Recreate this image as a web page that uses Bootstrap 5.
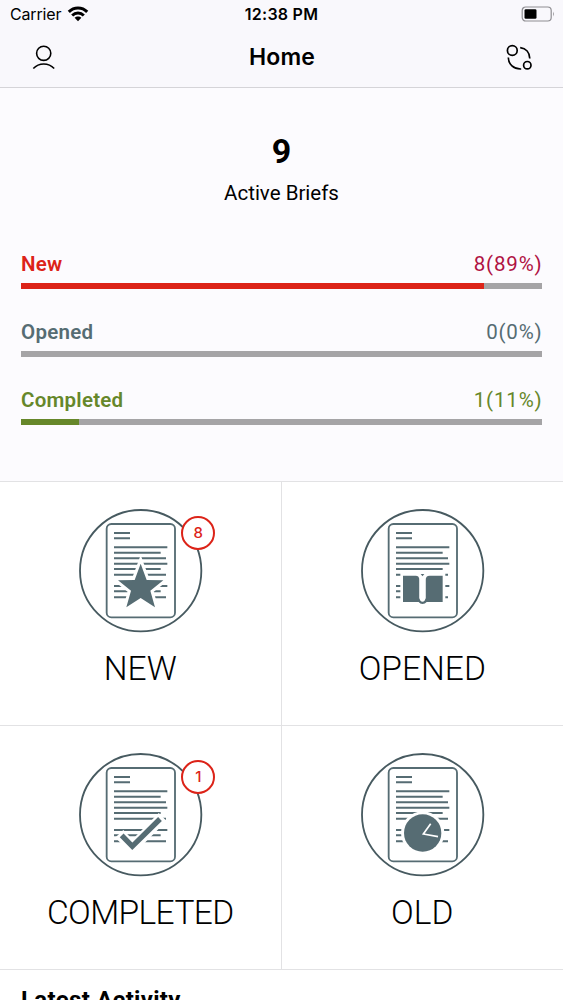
<!DOCTYPE html>
<html lang="en">
<head>
<meta charset="utf-8">
<meta name="viewport" content="width=device-width, initial-scale=1">
<title>Home</title>
<link rel="stylesheet" href="https://cdn.jsdelivr.net/npm/bootstrap@5.3.0/dist/css/bootstrap.min.css">
<style>
  :root { --slate: #566c73; --red: #dc2318; --green: #66872a; --rule: #e2e2e4; }
  html, body { overflow: hidden; height: 1000px; }
  body { font-family: Roboto, "Noto Sans", sans-serif; color: #000; background: #fff; }
  .topbar { height: 88px; background: #f9f8fc; border-bottom: 1px solid #d5d4d8; }
  .status { height: 28px; font: 400 16px/29px Inter, sans-serif; padding: 0 9px 0 10px; }
  .status > *, .titlebar > * { flex: 1 1 0; }
  .status > :first-child { letter-spacing: -.15px; }
  .titlebar { height: 59px; padding: 0 30px 0 31px; }
  .titlebar h1 { font: 600 23px/59px Inter, sans-serif; letter-spacing: .1px; }
  .status .clock { font-weight: 600; letter-spacing: .25px; padding-right: 1px; }
  .summary { height: 393px; background: #fcfbfe; padding: 0 21px; }
  .total { font-size: 34px; line-height: 40px; font-weight: 700; padding-top: 43px; }
  .total-label { font-size: 20.5px; line-height: 24px; margin-top: 10px; letter-spacing: 0; }
  .meters { padding-top: 46px; }
  .meter { height: 68px; font-size: 20.5px; }
  .meter-text { height: 32px; line-height: 27px; }
  .meter-name { font-weight: 600; letter-spacing: .25px; }
  .meter-value { letter-spacing: .85px; margin-right: -.6px; }
  .meter .progress { height: 5.5px; border-radius: 0; background: #a5a4a6; }
  .c-new { color: var(--red); } .c-new .meter-value { color: #b01243; }
  .c-opened { color: var(--slate); }
  .c-completed { color: var(--green); }
  .c-new .progress-bar { background: var(--red); }
  .c-opened .progress-bar { background: var(--slate); }
  .c-completed .progress-bar { background: var(--green); }
  .tile { height: 244px; border-top: 1px solid var(--rule); padding-top: 26px; }
  .tile-l { border-right: 1px solid var(--rule); }
  .pic { width: 126px; height: 126px; }
  .pic svg, .bar-icon { display: block; }
  .count { right: -12px; top: 8px; width: 34px; height: 34px; border: 2px solid var(--red); background: #fff; color: var(--red); font: 500 15px/30px Inter, sans-serif; }
  .tile-name { font-size: 33.5px; line-height: 40px; font-weight: 300; margin-top: 15px; }
  .tile-name.long { letter-spacing: -.6px; }
  .latest { border-top: 1px solid var(--rule); font-size: 24px; line-height: 28px; font-weight: 700; letter-spacing: .3px; padding: 16px 21px 0; height: 31px; }
</style>
</head>
<body>
<svg width="0" height="0" class="position-absolute" aria-hidden="true">
  <defs>
    <g id="sheet" fill="none" stroke="#566c73">
      <circle cx="212" cy="212" r="182" stroke="#475a60" stroke-width="5.5"/>
      <rect x="110" y="72" width="205" height="280" rx="14" stroke-width="5.5"/>
      <path stroke-width="6" d="M132 99H180M132 115H180M132 142H292M132 158H272M132 175H288M132 191H292M132 207H272M132 224H288M132 258H292M132 274H272M132 292H288"/>
    </g>
  </defs>
</svg>

<header class="topbar">
  <div class="status d-flex">
    <div class="d-flex align-items-center"><span>Carrier</span>
      <svg width="22" height="16" viewBox="0 0 22 16" style="margin-left:6px" fill="none" stroke="#000" stroke-width="3"><path d="M1.8 5.9C7 .8 15 .8 20.2 5.9M5.2 9.5C8.5 6.3 13.5 6.3 16.8 9.5"/><path d="M11 15.2L7.6 11.8C9.5 10 12.500 10 14.400 11.8Z" fill="#000" stroke="none"/></svg>
    </div>
    <div class="clock text-center">12:38 PM</div>
    <div class="d-flex align-items-center justify-content-end">
      <svg width="34" height="16" viewBox="0 0 34 16" style="margin-right:-1px"><rect x="1.200" y="1" width="29" height="14" rx="3.500" fill="none" stroke="#8f8e92" stroke-width="1.2"/><rect x="3.500" y="3.200" width="12" height="9.600" rx="1.300"/><path d="M32 5.500Q33.800 8 32 10.500Z" fill="#8f8e92"/></svg>
    </div>
  </div>
  <div class="titlebar d-flex align-items-center">
    <div><svg class="bar-icon" width="26" height="28" viewBox="0 0 26 28" fill="none" stroke="#000" stroke-width="1.600"><circle cx="12.700" cy="9.300" r="7.100"/><path d="M2.300 24.500C8 18.500 17.500 18.500 23.200 24.500"/></svg></div>
    <h1 class="text-center m-0">Home</h1>
    <div class="d-flex justify-content-end"><svg class="bar-icon" width="28" height="28" viewBox="0 0 28 28" fill="none" stroke="#000" stroke-width="1.700"><circle cx="7.300" cy="6.500" r="4.900"/><circle cx="22.300" cy="21.200" r="3.700"/><path d="M15.200 3.700C21 4.300 24.600 8.500 24.800 14.500M3.300 13.500C3.600 20.500 8.500 25.300 16.200 25"/></svg></div>
  </div>
</header>

<section class="summary">
  <div class="total text-center">9</div>
  <div class="total-label text-center">Active Briefs</div>
  <div class="meters">
    <div class="meter c-new">
      <div class="meter-text d-flex justify-content-between"><span class="meter-name">New</span><span class="meter-value">8(89%)</span></div>
      <div class="progress"><div class="progress-bar" style="width:88.8%"></div></div>
    </div>
    <div class="meter c-opened">
      <div class="meter-text d-flex justify-content-between"><span class="meter-name">Opened</span><span class="meter-value">0(0%)</span></div>
      <div class="progress"><div class="progress-bar" style="width:0%"></div></div>
    </div>
    <div class="meter c-completed">
      <div class="meter-text d-flex justify-content-between"><span class="meter-name">Completed</span><span class="meter-value">1(11%)</span></div>
      <div class="progress"><div class="progress-bar" style="width:11.2%"></div></div>
    </div>
  </div>
</section>

<main class="row g-0">
  <div class="col-6 tile tile-l text-center">
    <div class="pic position-relative mx-auto">
      <svg width="126" height="126" viewBox="21 24 378 378"><use href="#sheet"/><path d="M212 191L230 240L280 241L241 272L255 322L212 294L169 322L183 272L144 241L194 240Z" fill="#566c73" stroke="#fff" stroke-width="18" paint-order="stroke"/></svg>
      <span class="count position-absolute rounded-circle">8</span>
    </div>
    <div class="tile-name">NEW</div>
  </div>
  <div class="col-6 tile text-center">
    <div class="pic mx-auto">
      <svg width="126" height="126" viewBox="21 24 378 378"><use href="#sheet"/><path d="M145 219H280V314H145Z" fill="#fff"/><path d="M206 222H217L211.500 229Z" fill="#566c73"/><path d="M153 227H191Q202 227 202 240V294Q204 303 211.500 303Q219 303 221 294V240Q221 227 233 227H272V306H224Q219 312 211.500 312Q204 312 200 306H153Z" fill="#566c73"/><path d="M203 238V294Q204 305 211.500 305Q219 305 220 294V238Z" fill="#fff"/></svg>
    </div>
    <div class="tile-name">OPENED</div>
  </div>
  <div class="col-6 tile tile-l text-center">
    <div class="pic position-relative mx-auto">
      <svg width="126" height="126" viewBox="21 24 378 378"><use href="#sheet"/><g fill="none"><path d="M148 269L187 310L278 219" stroke="#fff" stroke-width="33"/><path d="M155 274L187 307L270 225" stroke="#566c73" stroke-width="16"/></g></svg>
      <span class="count position-absolute rounded-circle">1</span>
    </div>
    <div class="tile-name long">COMPLETED</div>
  </div>
  <div class="col-6 tile text-center">
    <div class="pic mx-auto">
      <svg width="126" height="126" viewBox="21 24 378 378"><use href="#sheet"/><circle cx="212" cy="267" r="65" fill="#fff" stroke="none"/><circle cx="212" cy="267" r="56" fill="#566c73"/><path d="M236 239L214 270L258 278" fill="none" stroke="#fff" stroke-width="5"/></svg>
    </div>
    <div class="tile-name">OLD</div>
  </div>
</main>
<div class="latest">Latest Activity</div>
<script src="https://cdn.jsdelivr.net/npm/bootstrap@5.3.0/dist/js/bootstrap.bundle.min.js"></script>
</body>
</html>
